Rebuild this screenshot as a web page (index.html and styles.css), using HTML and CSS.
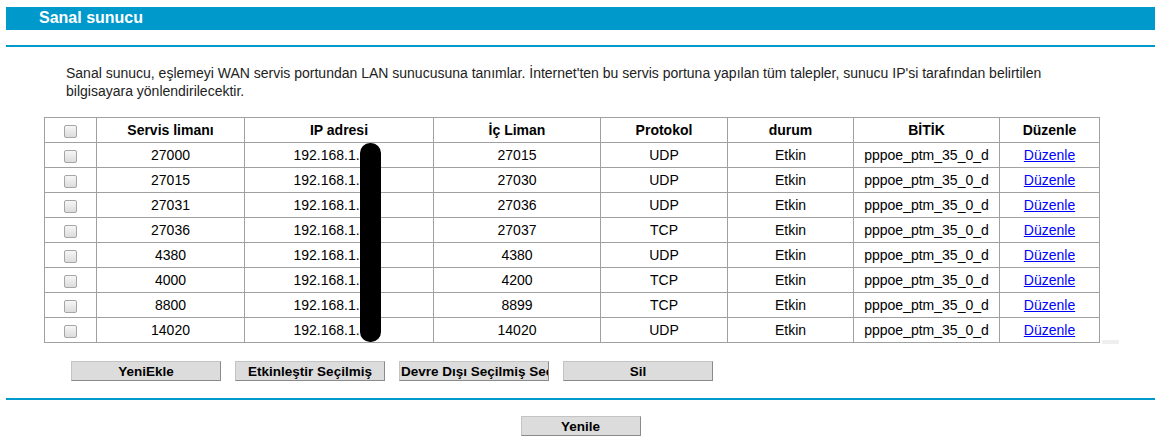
FILE: index.html
```html
<!DOCTYPE html>
<html lang="tr">
<head>
  <meta charset="UTF-8">
  <title>Sanal sunucu</title>
  <link rel="stylesheet" href="styles.css">
</head>
<body>
<div class="page">
  <div class="title-bar">Sanal sunucu</div>
  <div class="rule"></div>

  <p class="intro">Sanal sunucu, eşlemeyi WAN servis portundan LAN sunucusuna tanımlar. İnternet'ten bu servis portuna yapılan tüm talepler, sunucu IP'si tarafından belirtilen bilgisayara yönlendirilecektir.</p>

  <div class="table-wrap">
    <table class="list">
      <colgroup>
        <col style="width:52px"><col style="width:148px"><col style="width:189px"><col style="width:167px">
        <col style="width:127px"><col style="width:126px"><col style="width:146px"><col style="width:100px">
      </colgroup>
      <tr>
        <th><input type="checkbox"></th>
        <th>Servis limanı</th>
        <th>IP adresi</th>
        <th>İç Liman</th>
        <th>Protokol</th>
        <th>durum</th>
        <th>BİTİK</th>
        <th>Düzenle</th>
      </tr>
      <tr><td><input type="checkbox"></td><td>27000</td><td class="ip">192.168.1.</td><td>27015</td><td>UDP</td><td>Etkin</td><td>pppoe_ptm_35_0_d</td><td><a href="#">Düzenle</a></td></tr>
      <tr><td><input type="checkbox"></td><td>27015</td><td class="ip">192.168.1.</td><td>27030</td><td>UDP</td><td>Etkin</td><td>pppoe_ptm_35_0_d</td><td><a href="#">Düzenle</a></td></tr>
      <tr><td><input type="checkbox"></td><td>27031</td><td class="ip">192.168.1.</td><td>27036</td><td>UDP</td><td>Etkin</td><td>pppoe_ptm_35_0_d</td><td><a href="#">Düzenle</a></td></tr>
      <tr><td><input type="checkbox"></td><td>27036</td><td class="ip">192.168.1.</td><td>27037</td><td>TCP</td><td>Etkin</td><td>pppoe_ptm_35_0_d</td><td><a href="#">Düzenle</a></td></tr>
      <tr><td><input type="checkbox"></td><td>4380</td><td class="ip">192.168.1.</td><td>4380</td><td>UDP</td><td>Etkin</td><td>pppoe_ptm_35_0_d</td><td><a href="#">Düzenle</a></td></tr>
      <tr><td><input type="checkbox"></td><td>4000</td><td class="ip">192.168.1.</td><td>4200</td><td>TCP</td><td>Etkin</td><td>pppoe_ptm_35_0_d</td><td><a href="#">Düzenle</a></td></tr>
      <tr><td><input type="checkbox"></td><td>8800</td><td class="ip">192.168.1.</td><td>8899</td><td>TCP</td><td>Etkin</td><td>pppoe_ptm_35_0_d</td><td><a href="#">Düzenle</a></td></tr>
      <tr><td><input type="checkbox"></td><td>14020</td><td class="ip">192.168.1.</td><td>14020</td><td>UDP</td><td>Etkin</td><td>pppoe_ptm_35_0_d</td><td><a href="#">Düzenle</a></td></tr>
    </table>
    <div class="scroll-stub"></div>
    <div class="redact"></div>
  </div>

  <div class="actions">
    <button class="btn">YeniEkle</button>
    <button class="btn">Etkinleştir Seçilmiş</button>
    <button class="btn btn-clip">Devre Dışı Seçilmiş Seç</button>
    <button class="btn">Sil</button>
  </div>

  <div class="rule rule-bottom"></div>

  <div class="refresh">
    <button class="btn btn-small">Yenile</button>
  </div>
</div>
</body>
</html>
```

FILE: styles.css
```css
body {
  margin: 0;
  font-family: "Liberation Sans", Arial, sans-serif;
  font-size: 14px;
  color: #000;
  background: #fff;
}

.page {
  width: 1149px;
  margin-left: 6px;
  padding-top: 7px;
}

.title-bar {
  height: 23px;
  line-height: 21px;
  background-color: #0099cc;
  color: #fff;
  font-weight: bold;
  font-size: 16px;
  padding-left: 33px;
}

.rule {
  height: 2px;
  background-color: #0099cc;
  margin-top: 15px;
}

.intro {
  margin: 17px 0 0 60px;
  width: 990px;
  line-height: 18px;
  color: #222;
}

.table-wrap {
  position: relative;
  display: flex;
  align-items: flex-end;
  margin: 17px 0 0 38px;
}

.list {
  border-collapse: collapse;
  table-layout: fixed;
  width: 1055px;
}

.list th,
.list td {
  border: 1px solid #a0a0a0;
  height: 24px;
  padding: 0;
  text-align: center;
  white-space: nowrap;
}

.list th {
  font-weight: bold;
}

.list td.ip {
  padding-right: 25px;
}

.list input[type="checkbox"] {
  appearance: none;
  -webkit-appearance: none;
  margin: 0;
  width: 13px;
  height: 13px;
  vertical-align: middle;
  border: 1px solid #a6a6a6;
  border-radius: 2px;
  background: linear-gradient(#f6f6f6, #dcdcdc);
}

.list a {
  color: #0000ff;
}

.scroll-stub {
  width: 17px;
  height: 4px;
  margin: 0 0 -1px 2px;
  background-color: #efefef;
}

.redact {
  position: absolute;
  left: 316px;
  top: 26px;
  width: 21px;
  height: 199px;
  background: #000;
  border-radius: 10px;
}

.actions {
  display: flex;
  gap: 14px;
  margin: 18px 0 0 65px;
}

.btn {
  width: 150px;
  height: 20px;
  padding: 0 1px;
  background-color: #dcdcdc;
  border: 1px solid;
  border-color: #c4c4c4 #8a8a8a #8a8a8a #c4c4c4;
  font-family: "Liberation Sans", Arial, sans-serif;
  font-size: 13.5px;
  font-weight: bold;
  color: #000;
  white-space: nowrap;
  overflow: hidden;
  text-align: center;
}

.btn-clip {
  text-align: left;
}

.rule-bottom {
  margin-top: 17px;
}

.refresh {
  display: flex;
  justify-content: center;
  margin-top: 16px;
}

.btn-small {
  width: 120px;
}
```
